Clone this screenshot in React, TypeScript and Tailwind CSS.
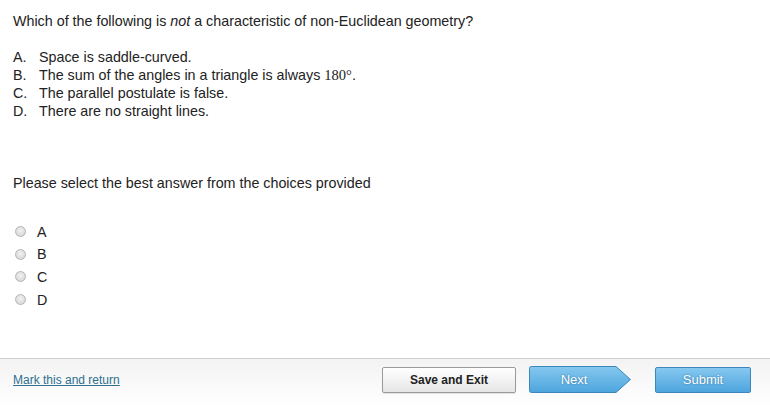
import React from "react";

const font = { fontFamily: '"Liberation Sans", Arial, sans-serif' };

function Radio() {
  return (
    <span className="inline-block w-[11px] h-[11px] rounded-full border border-[#b5b5b5] bg-[radial-gradient(circle_at_50%_40%,#f2f2f2,#d0d0d0)]" />
  );
}

export default function App() {
  const choices = [
    ["A.", <>Space is saddle-curved.</>],
    [
      "B.",
      <>
        The sum of the angles in a triangle is always{" "}
        <span style={{ fontFamily: '"Liberation Serif", "DejaVu Serif", serif' }} className="text-[14.5px]">180°</span>.
      </>,
    ],
    ["C.", <>The parallel postulate is false.</>],
    ["D.", <>There are no straight lines.</>],
  ] as const;

  const rowH = ["h-[23px]", "h-[22px]", "h-[23px]", "h-[23px]"];

  return (
    <div className="w-[770px] h-[407px] bg-white flex flex-col text-[#222] text-[14.3px] leading-[18px]" style={font}>
      <div className="flex-1 pl-[13px] pt-[12px]">
        <div>
          Which of the following is <em>not</em> a characteristic of non-Euclidean geometry?
        </div>
        <div className="mt-[18px]">
          {choices.map(([l, t]) => (
            <div key={l} className="flex h-[18px]">
              <span className="w-[26px]">{l}</span>
              <span>{t}</span>
            </div>
          ))}
        </div>
        <div className="mt-[54px]">Please select the best answer from the choices provided</div>
        <div className="mt-[28px] flex flex-col">
          {["A", "B", "C", "D"].map((l, i) => (
            <div key={l} className={`flex items-center ${rowH[i]}`}>
              <span className="w-[24px] flex items-center pl-[2px]">
                <Radio />
              </span>
              <span>{l}</span>
            </div>
          ))}
        </div>
      </div>
      <div className="h-[49px] border-t border-[#cfcfcf] bg-[linear-gradient(#f3f3f3,#ffffff)] flex items-start pt-[7px] pl-[13px] pr-[19px]">
        <a href="#" className="text-[12px] leading-[18px] mt-[5px] text-[#2d6f8e] underline">
          Mark this and return
        </a>
        <div className="ml-auto flex items-center">
          <button className="w-[134px] h-[26px] rounded-[2px] border border-[#9a9a9a] bg-[linear-gradient(#ffffff,#e6e6e6)] text-[12px] font-bold text-[#222] shadow-[0_1px_1px_rgba(0,0,0,0.1)]">
            Save and Exit
          </button>
          <button className="relative ml-[12px] w-[104px] h-[27px] text-[13px] text-white [text-shadow:0_0_2px_#2b6d99]">
            <svg className="absolute inset-0" width="104" height="27" viewBox="0 0 104 27">
              <defs>
                <linearGradient id="ng" x1="0" y1="0" x2="0" y2="1">
                  <stop offset="0" stopColor="#86c8f0" />
                  <stop offset="1" stopColor="#4da5dd" />
                </linearGradient>
              </defs>
              <path d="M1.5 2.5 Q1.5 0.5 3.5 0.5 H88 L102.5 13.5 L88 26.5 H3.5 Q1.5 26.5 1.5 24.5 Z" fill="url(#ng)" stroke="#3d88ba" />
            </svg>
            <span className="relative pr-[12px]">Next</span>
          </button>
          <button className="ml-[23px] w-[96px] h-[26px] rounded-[2px] border border-[#3d88ba] bg-[linear-gradient(#86c8f0,#4da5dd)] text-[13px] text-white [text-shadow:0_0_2px_#2b6d99]">
            Submit
          </button>
        </div>
      </div>
    </div>
  );
}
